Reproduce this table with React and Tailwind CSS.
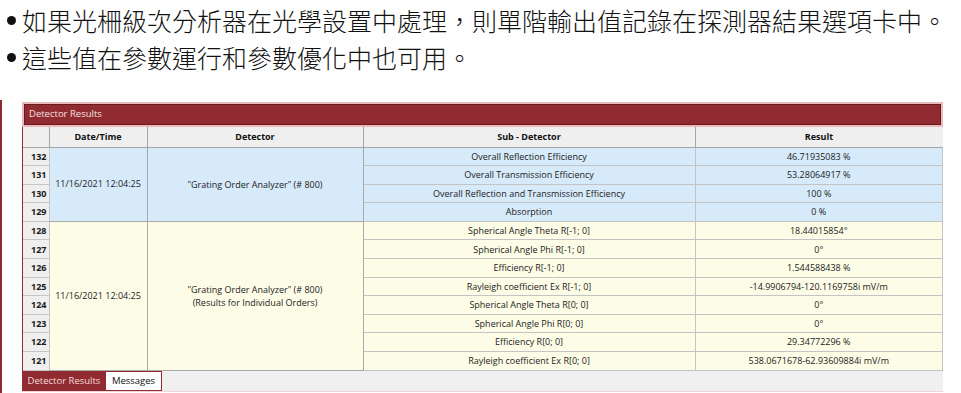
const blueRows = [
  { n: 132, sub: "Overall Reflection Efficiency", res: "46.71935083 %" },
  { n: 131, sub: "Overall Transmission Efficiency", res: "53.28064917 %" },
  { n: 130, sub: "Overall Reflection and Transmission Efficiency", res: "100 %" },
  { n: 129, sub: "Absorption", res: "0 %" },
];

const yellowRows = [
  { n: 128, sub: "Spherical Angle Theta R[-1; 0]", res: "18.44015854°" },
  { n: 127, sub: "Spherical Angle Phi R[-1; 0]", res: "0°" },
  { n: 126, sub: "Efficiency R[-1; 0]", res: "1.544588438 %" },
  { n: 125, sub: "Rayleigh coefficient Ex R[-1; 0]", res: "-14.9906794-120.1169758i mV/m" },
  { n: 124, sub: "Spherical Angle Theta R[0; 0]", res: "0°" },
  { n: 123, sub: "Spherical Angle Phi R[0; 0]", res: "0°" },
  { n: 122, sub: "Efficiency R[0; 0]", res: "29.34772296 %" },
  { n: 121, sub: "Rayleigh coefficient Ex R[0; 0]", res: "538.0671678-62.93609884i mV/m" },
];

const numCell =
  "border-b border-r border-[#c6c6c6] bg-[#efefef] pr-[2px] text-right font-bold text-[#1a1a1a]";
const cell = "border-b border-r border-[#c4c4c4] text-center";

const Group = ({ rows, bg, detector }) =>
  rows.map((r, i) => (
    <tr key={r.n} className="h-[18.6px]">
      <td className={numCell}>{r.n}</td>
      {i === 0 && (
        <>
          <td rowSpan={rows.length} className={`border-b border-r border-[#a9a9a9] ${bg} text-center`}>
            11/16/2021 12:04:25
          </td>
          <td rowSpan={rows.length} className={`border-b border-r border-[#a9a9a9] ${bg} text-center leading-[13px]`}>
            {detector}
          </td>
        </>
      )}
      <td className={`${cell} ${bg}`}>{r.sub}</td>
      <td className={`${cell} ${bg}`}>{r.res}</td>
    </tr>
  ));

const Bullet = ({ children }) => (
  <div className="flex h-[37px] items-center">
    <span className="ml-[7px] mr-[6px] h-[9px] w-[9px] rounded-full bg-[#111]" />
    <span>{children}</span>
  </div>
);

export default function App() {
  return (
    <div className="h-[393px] w-[961px] overflow-hidden bg-white">
      <div
        className="h-[100px] pt-[2px] text-[25px] font-light text-[#111]"
        style={{ fontFamily: '"Noto Sans CJK TC", "Noto Sans", sans-serif' }}
      >
        <Bullet>如果光柵級次分析器在光學設置中處理，則單階輸出值記錄在探測器結果選項卡中。</Bullet>
        <Bullet>這些值在參數運行和參數優化中也可用。</Bullet>
      </div>

      <div className="flex h-[293px]">
        <div className="w-[2px] bg-[#8d2a30]" />
        <div
          className="ml-[20px] mt-[2px] flex w-[921px] flex-col text-[9px] text-[#222]"
          style={{ fontFamily: '"Open Sans", "Noto Sans", sans-serif' }}
        >
          <div className="border border-[#e9b9bc] bg-[#e9b9bc] p-[1px]">
            <div className="flex h-[21px] items-center border border-[#6a1a1f] bg-[#8f2b31] pl-[4px] text-[9.5px] text-[#f6e1e1]">
              Detector Results
            </div>
          </div>
          <div className="border-l border-[#8f2b31]">
            <table className="w-full table-fixed border-collapse">
              <colgroup>
                <col className="w-[26px]" />
                <col className="w-[98px]" />
                <col className="w-[216px]" />
                <col className="w-[332px]" />
                <col />
              </colgroup>
              <thead>
                <tr className="h-[20px] bg-[#efefef] font-bold text-[#111]">
                  <th className="border-b border-r border-[#a6a6a6]" />
                  <th className="border-b border-r border-[#a6a6a6]">Date/Time</th>
                  <th className="border-b border-r border-[#a6a6a6]">Detector</th>
                  <th className="border-b border-r border-[#a6a6a6]">Sub - Detector</th>
                  <th className="border-b border-[#a6a6a6]">Result</th>
                </tr>
              </thead>
              <tbody>
                <Group rows={blueRows} bg="bg-[#d6eafa]" detector={'"Grating Order Analyzer" (# 800)'} />
                <Group
                  rows={yellowRows}
                  bg="bg-[#fdfde7]"
                  detector={
                    <>
                      "Grating Order Analyzer" (# 800)
                      <br />
                      (Results for Individual Orders)
                    </>
                  }
                />
              </tbody>
            </table>
            <div className="flex h-[20px] bg-[#f0f0f0]">
              <div className="flex w-[82px] items-center justify-center bg-[#8f2b31] text-[9.5px] text-[#f3dcdc]">
                Detector Results
              </div>
              <div className="flex w-[57px] items-center justify-center border border-[#8f2b31] bg-white text-[9.5px] text-[#111]">
                Messages
              </div>
            </div>
          </div>
          <div className="h-[1px] bg-[#f3d4d6]" />
        </div>
      </div>
    </div>
  );
}
